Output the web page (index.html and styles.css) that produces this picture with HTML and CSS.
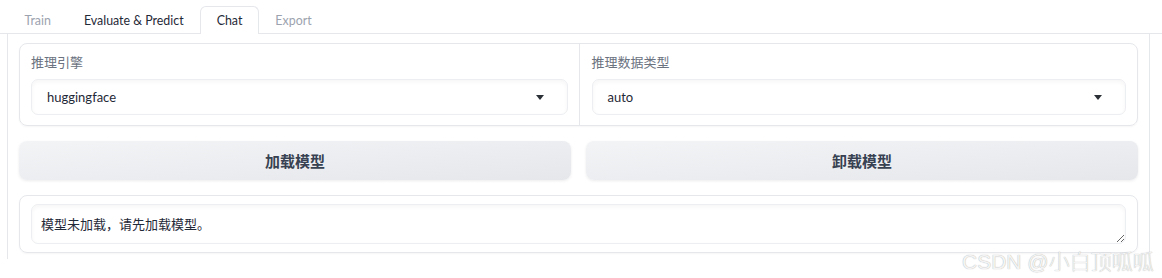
FILE: index.html
```html
<!DOCTYPE html>
<html>

<head>
    <meta charset="utf-8">
    <link rel="stylesheet" href="styles.css">
</head>

<body>
    <div class="tabs">
        <div class="tab-nav">
            <button class="tab muted">Train</button>
            <button class="tab">Evaluate &amp; Predict</button>
            <button class="tab selected">Chat</button>
            <button class="tab muted">Export</button>
        </div>

        <div class="tab-panel">
            <!-- engine + dtype dropdowns -->
            <div class="form-row">
                <div class="field">
                    <span class="label">推理引擎</span>
                    <div class="select">
                        <span>huggingface</span>
                        <svg class="caret" width="8" height="5" viewBox="0 0 8 5"><path d="M0 0H8L4 5Z" fill="#2b2f36"/></svg>
                    </div>
                </div>
                <div class="field">
                    <span class="label">推理数据类型</span>
                    <div class="select">
                        <span>auto</span>
                        <svg class="caret" width="8" height="5" viewBox="0 0 8 5"><path d="M0 0H8L4 5Z" fill="#2b2f36"/></svg>
                    </div>
                </div>
            </div>

            <div class="btn-row">
                <button class="big-btn">加载模型</button>
                <button class="big-btn">卸载模型</button>
            </div>

            <div class="box">
                <textarea class="info" readonly>模型未加载，请先加载模型。</textarea>
            </div>
        </div>
    </div>

    <div class="watermark">CSDN @小白顶呱呱</div>
</body>

</html>
```

FILE: styles.css
```css
body {
    margin: 0;
    font-family: "Lato", "Noto Sans CJK SC", sans-serif;
    background-color: #fff;
    color: #1f2937;
}

/* tab bar */
.tab-nav {
    display: flex;
    padding: 6px 0 0 8px;
    height: 27px;
    border-bottom: 1px solid #e5e7eb;
}

.tab {
    height: 28px;
    margin-bottom: -1px;
    padding: 0 15.5px 1px 15.5px;
    border: 1px solid transparent;
    border-bottom: none;
    border-radius: 6px 6px 0 0;
    background: none;
    font-family: inherit;
    font-size: 12.4px;
    color: #1f2937;
}

.tab.muted {
    color: #9ca3af;
}

.tab.selected {
    background: #fff;
    border-color: #e5e7eb;
}

/* panel under the tabs */
.tab-panel {
    margin: 0 12px 0 7px;
    padding: 9px 11px 6px 11px;
    border: 1px solid #e5e7eb;
    border-top: none;
    border-bottom: none;
}

.form-row {
    display: grid;
    grid-template-columns: 1fr 1fr;
    border: 1px solid #e5e7eb;
    border-radius: 8px;
    box-shadow: 0 1px 2px rgba(0, 0, 0, 0.04);
}

.field {
    padding: 9px 11px 10px 11px;
}

.field + .field {
    border-left: 1px solid #e5e7eb;
    padding-left: 12px;
}

.label {
    display: block;
    height: 18px;
    line-height: 18px;
    margin-bottom: 8px;
    font-size: 13px;
    color: #6b7280;
}

.select {
    display: flex;
    align-items: center;
    justify-content: space-between;
    height: 34px;
    padding: 0 23px 0 15px;
    border: 1px solid #eceef1;
    border-radius: 7px;
    box-shadow: inset 0 2px 4px rgba(0, 0, 0, 0.04);
    font-size: 13px;
    color: #1f2937;
}

.btn-row {
    display: grid;
    grid-template-columns: 1fr 1fr;
    gap: 15px;
    margin-top: 15px;
}

.big-btn {
    height: 39px;
    border: none;
    border-radius: 8px;
    background: linear-gradient(to bottom right, #f3f4f6, #e5e7eb);
    box-shadow: 0 1px 3px rgba(0, 0, 0, 0.08);
    font-family: inherit;
    font-size: 15px;
    font-weight: bold;
    color: #374151;
}

.box {
    margin-top: 15px;
    padding: 8px 11px;
    border: 1px solid #e5e7eb;
    border-radius: 8px;
    box-shadow: 0 1px 2px rgba(0, 0, 0, 0.04);
}

.info {
    display: block;
    box-sizing: border-box;
    width: 100%;
    height: 40px;
    padding: 9px 9px;
    border: 1px solid #eceef1;
    border-radius: 7px;
    box-shadow: inset 0 2px 4px rgba(0, 0, 0, 0.04);
    resize: vertical;
    outline: none;
    font-family: inherit;
    font-size: 13px;
    line-height: 20px;
    color: #1f2937;
}

.watermark {
    position: absolute;
    left: 962px;
    top: 245px;
    font-family: "Liberation Sans", "Noto Sans CJK SC", sans-serif;
    font-size: 21px;
    font-weight: 300;
    color: #f4f4f4;
    text-shadow: 0 0 1px #a0a0a0;
    white-space: nowrap;
}
```
